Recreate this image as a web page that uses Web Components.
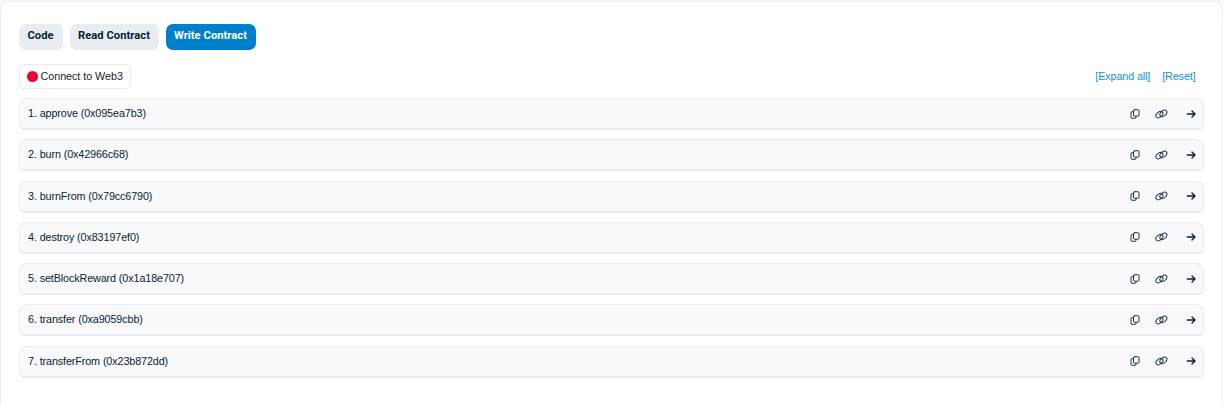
<!DOCTYPE html>
<html lang="en"><head><meta charset="utf-8"><title>Write Contract</title>
<style>
html,body{margin:0;height:100%;overflow:hidden;background:#f8f9fb}
body{font-family:"Liberation Sans",Arial,sans-serif;font-size:10.8px;letter-spacing:-.12px;color:#081d35}
</style></head><body>
<contract-card></contract-card>
<script>
const define=(name,html)=>customElements.define(name,class extends HTMLElement{
  constructor(){super();this.attachShadow({mode:'open'}).innerHTML=html;}
});
define('contract-tab',`<style>
:host{display:block;box-sizing:border-box;height:26px;border-radius:7px;background:#e9ecf1;color:#081d35;padding-right:1px;text-align:center;font:700 11.2px/23px Roboto,sans-serif;letter-spacing:.04px;white-space:nowrap}
:host([active]){background:#0080cb;color:#fff}
</style><slot></slot>`);
define('connect-button',`<style>
:host{display:flex;box-sizing:border-box;width:112px;height:25px;border:1px solid #e7eaf3;border-radius:5px;align-items:center;padding:0 0 1px 7px;gap:2.5px;color:#212529;background:#fff;white-space:nowrap;letter-spacing:-.06px}
i{width:11px;height:11px;border-radius:50%;background:#f00034;flex:none}
</style><i></i><slot></slot>`);
define('action-link',`<style>:host{display:block;color:#0c93d8;white-space:nowrap;letter-spacing:-.13px}</style><slot></slot>`);
define('method-row',`<style>
:host{display:flex;box-sizing:border-box;height:32px;border:1px solid #e9ecf1;border-bottom-width:2px;border-radius:8px 8px 5px 5px;background:#f8f9fb;align-items:center;padding:0 7px 0 8px}
span{flex:1;white-space:nowrap;line-height:14px;padding-bottom:1px}
svg{display:block;flex:none;fill:none;stroke:#21314a;stroke-width:1;stroke-linecap:round;stroke-linejoin:round}
.copy{width:10px;height:10px;margin-right:15px}
.link{width:13px;height:10px;margin-right:18px}
.arrow{width:10px;height:10px;stroke:#081d35;stroke-width:1.4}
</style><span><slot></slot></span>
<svg class="copy" viewBox="0 0 10 10"><rect x="3.5" y=".7" width="5.5" height="6.5" rx="1.1"/><path d="M3.2 2.7H2A1 1 0 0 0 1 3.7V8.3A1 1 0 0 0 2 9.3H5A1 1 0 0 0 6 8.3V7.5"/></svg>
<svg class="link" viewBox="0 0 13 10"><ellipse cx="4.4" cy="5.6" rx="4" ry="2.5" transform="rotate(-38 4.4 5.6)"/><ellipse cx="8.4" cy="4.4" rx="4" ry="2.5" transform="rotate(-38 8.4 4.4)"/></svg>
<svg class="arrow" viewBox="0 0 10 10"><path d="M1.3 5H9M6 2L9 5L6 8"/></svg>`);
define('contract-card',`<style>
:host{display:block;box-sizing:border-box;width:1223px;height:420px;margin-top:1px;border:1px solid #e9ecf1;border-radius:10px;background:#fff;padding:22px 18px 0}
nav{display:flex;gap:7px}
.bar{display:flex;justify-content:space-between;align-items:center;height:25px;margin:14px 0 9px;padding-right:8.5px}
.links{display:flex;gap:12px;padding-bottom:1px}
.list{display:grid;gap:9.25px}
</style>
<nav><contract-tab style="width:44px">Code</contract-tab><contract-tab style="width:89px">Read Contract</contract-tab><contract-tab active style="width:90px">Write Contract</contract-tab></nav>
<div class="bar"><connect-button>Connect to Web3</connect-button><div class="links"><action-link>[Expand all]</action-link><action-link>[Reset]</action-link></div></div>
<div class="list">${['approve (0x095ea7b3)','burn (0x42966c68)','burnFrom (0x79cc6790)','destroy (0x83197ef0)','setBlockReward (0x1a18e707)','transfer (0xa9059cbb)','transferFrom (0x23b872dd)'].map((m,i)=>`<method-row>${i+1}. ${m}</method-row>`).join('')}</div>`);
</script></body></html>
